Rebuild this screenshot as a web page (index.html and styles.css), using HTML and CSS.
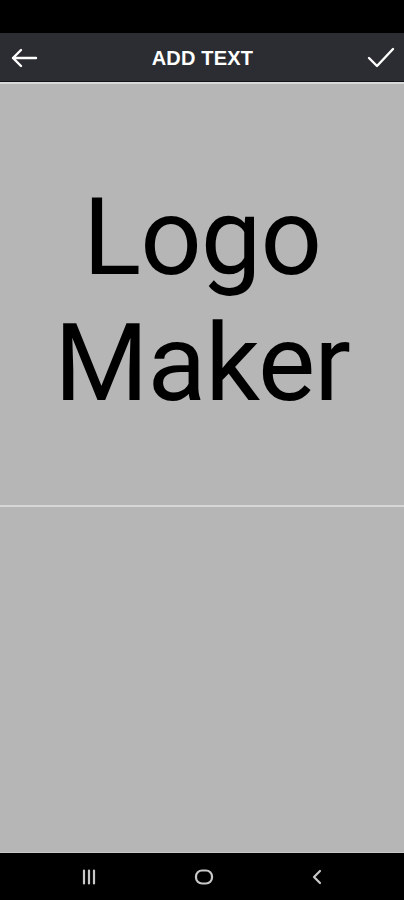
FILE: index.html
```html
<!DOCTYPE html>
<html>
<head>
  <title>Add text</title>
  <link rel="stylesheet" href="styles.css">
</head>
<body>
  <div class="screen">
    <div class="status-bar"></div>
    <div class="toolbar">
      <button class="tool-btn" aria-label="Back">
        <svg width="28" height="20" viewBox="0 0 28 20">
          <path d="M26 10H3M11 2L3 10l8 8" fill="none" stroke="#fff" stroke-width="2.4" stroke-linecap="round" stroke-linejoin="round"/>
        </svg>
      </button>
      <h1 class="title">ADD TEXT</h1>
      <button class="tool-btn" aria-label="Done">
        <svg width="28" height="22" viewBox="0 0 28 22">
          <path d="M2 11l8 8L26 2" fill="none" stroke="#fff" stroke-width="2.4" stroke-linecap="round" stroke-linejoin="round"/>
        </svg>
      </button>
    </div>
    <div class="canvas">
      <div class="preview">
        <p class="logo-text">Logo<br>Maker</p>
      </div>
      <div class="divider"></div>
      <div class="editor"></div>
    </div>
    <div class="nav-bar">
      <svg width="16" height="16" viewBox="0 0 16 16">
        <path d="M3 1.5v13M8 1.5v13M13 1.5v13" stroke="#c8c8c8" stroke-width="2.2" stroke-linecap="round"/>
      </svg>
      <svg width="20" height="16" viewBox="0 0 20 16">
        <rect x="2" y="1.5" width="16" height="13" rx="6" fill="none" stroke="#c8c8c8" stroke-width="2.2"/>
      </svg>
      <svg width="14" height="16" viewBox="0 0 14 16">
        <path d="M10 2L4 8l6 6" fill="none" stroke="#c8c8c8" stroke-width="2.2" stroke-linecap="round" stroke-linejoin="round"/>
      </svg>
    </div>
  </div>
</body>
</html>
```

FILE: styles.css
```css
body {
  margin: 0;
  background-color: #000;
  font-family: Roboto, "Liberation Sans", sans-serif;
}

.screen {
  display: flex;
  flex-direction: column;
  width: 404px;
  height: 900px;
  overflow: hidden;
}

.status-bar {
  height: 33px;
  background-color: #000;
}

.toolbar {
  display: flex;
  align-items: center;
  justify-content: space-between;
  height: 49px;
  padding: 2px 9px 0 10px;
  box-sizing: border-box;
  background-color: #2b2d32;
  border-bottom: 1px solid #141517;
}

.tool-btn {
  display: flex;
  align-items: center;
  justify-content: center;
  padding: 0;
  border: none;
  background: none;
  cursor: pointer;
}

.title {
  margin: 0;
  color: #fff;
  font-family: "Liberation Sans", Arial, sans-serif;
  font-weight: bold;
  font-size: 20px;
  letter-spacing: 0.2px;
}

.canvas {
  flex: 1;
  display: flex;
  flex-direction: column;
  background-color: #b6b6b6;
  border-top: 2px solid #d9d9d9;
  border-bottom: 1px solid #c8c8c8;
}

.preview {
  height: 421px;
  padding-top: 90px;
  box-sizing: border-box;
}

.logo-text {
  margin: 0;
  text-align: center;
  color: #000;
  font-size: 108px;
  line-height: 126px;
  letter-spacing: -1px;
}

.divider {
  height: 2px;
  background-color: #d6d6d6;
}

.editor {
  flex: 1;
}

.nav-bar {
  display: flex;
  align-items: center;
  justify-content: space-between;
  height: 47px;
  padding: 0 80px 0 81px;
  background-color: #000;
}
```
